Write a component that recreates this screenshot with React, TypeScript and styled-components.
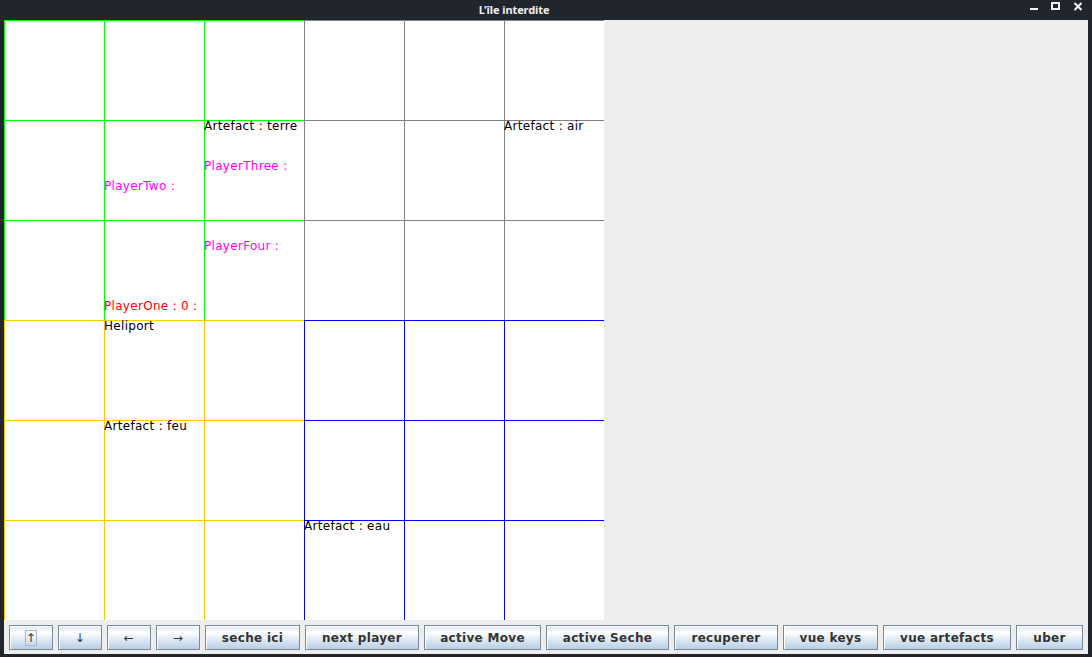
import React from "react";
import styled, { createGlobalStyle } from "styled-components";

const GlobalStyle = createGlobalStyle`
  html, body { margin: 0; padding: 0; background: #21252d; }
  body { font-family: "DejaVu Sans", "Liberation Sans", sans-serif; }
  #root { width: 1092px; height: 657px; }
`;

const Window = styled.div`
  width: 1092px;
  height: 657px;
  background: #21252d;
  display: flex;
  flex-direction: column;
  overflow: hidden;
`;

const TitleBar = styled.div`
  height: 20px;
  display: flex;
  align-items: center;
`;

const Title = styled.div`
  flex: 0 0 1028px;
  text-align: center;
  color: #eef0f2;
  font-family: "Noto Sans", "DejaVu Sans", sans-serif;
  font-weight: bold;
  font-size: 11px;
  line-height: 20px;
  letter-spacing: -0.1px;
`;

const Controls = styled.div`
  flex: 1;
  display: flex;
  align-items: center;
  height: 20px;
`;

const CtrlIcon = styled.svg<{ $ml: number }>`
  display: block;
  flex: none;
  margin-left: ${(p) => p.$ml}px;
`;

const Frame = styled.div`
  margin: 0 4px;
  height: 634px;
  background: #eeeeee;
  display: flex;
  flex-direction: column;
`;

const MainRow = styled.div`
  height: 600px;
  display: flex;
`;

const Board = styled.div`
  width: 600px;
  height: 600px;
  display: grid;
  grid-template-columns: repeat(6, 100px);
  grid-template-rows: repeat(6, 100px);
  background: #ffffff;
`;

const Cell = styled.div<{ $line: string }>`
  box-sizing: border-box;
  border-top: 1px solid ${(p) => p.$line};
  border-left: 1px solid ${(p) => p.$line};
  display: grid;
  grid-template-rows: repeat(5, 20px);
  align-content: start;
  overflow: visible;
  background: #ffffff;
`;

const CellText = styled.span<{ $row: number; $color: string }>`
  grid-row: ${(p) => p.$row + 1};
  color: ${(p) => p.$color};
  font-family: "DejaVu Sans", sans-serif;
  font-size: 12px;
  line-height: 10px;
  letter-spacing: 0.3px;
  margin-left: -1px;
  white-space: nowrap;
  position: relative;
  z-index: 1;
`;

const SidePanel = styled.div`
  flex: 1;
  background: #eeeeee;
`;

const Toolbar = styled.div`
  height: 34px;
  box-sizing: border-box;
  padding: 5px 0 0 5px;
  display: flex;
  gap: 5px;
  align-items: flex-start;
  background: #eeeeee;
`;

const Button = styled.button<{ $w: number }>`
  width: ${(p) => p.$w}px;
  height: 25px;
  box-sizing: border-box;
  margin: 0;
  padding: 0;
  border: 1px solid #7a8a99;
  border-radius: 0;
  box-shadow: inset 1px 1px 0 #ffffff;
  background: linear-gradient(
    to bottom,
    #dde8f3 0%,
    #ffffff 30%,
    #dde8f3 60%,
    #b8cfe5 100%
  );
  color: #333333;
  font-family: "DejaVu Sans", sans-serif;
  font-weight: bold;
  font-size: 12px;
  letter-spacing: 0.3px;
  display: flex;
  align-items: center;
  justify-content: center;
  cursor: default;
`;

const ArrowLabel = styled.span`
  font-weight: normal;
  font-size: 12px;
`;

const Focus = styled.span`
  box-sizing: border-box;
  width: 12px;
  height: 16px;
  border: 1px solid #a3b8cc;
  display: flex;
  align-items: center;
  justify-content: center;
  font-weight: normal;
`;

type Txt = { row: number; text: string; color: string };

const BLACK = "#000000";
const MAG = "#ff00ff";
const RED = "#ff0000";

const texts: Record<string, Txt[]> = {
  "2,1": [
    { row: 0, text: "Artefact : terre", color: BLACK },
    { row: 2, text: "PlayerThree :", color: MAG },
  ],
  "1,1": [{ row: 3, text: "PlayerTwo :", color: MAG }],
  "5,1": [{ row: 0, text: "Artefact : air", color: BLACK }],
  "2,2": [{ row: 1, text: "PlayerFour :", color: MAG }],
  "1,2": [{ row: 4, text: "PlayerOne : 0 :", color: RED }],
  "1,3": [{ row: 0, text: "Heliport", color: BLACK }],
  "1,4": [{ row: 0, text: "Artefact : feu", color: BLACK }],
  "3,5": [{ row: 0, text: "Artefact : eau", color: BLACK }],
};

const zoneColor = (c: number, r: number) => {
  if (r < 3) return c < 3 ? "#00ff00" : "#808080";
  return c < 3 ? "#ffc800" : "#0000ff";
};

const buttons: { label: string; w: number; arrow?: boolean }[] = [
  { label: "↓", w: 44, arrow: true },
  { label: "←", w: 44, arrow: true },
  { label: "→", w: 44, arrow: true },
  { label: "seche ici", w: 95 },
  { label: "next player", w: 114 },
  { label: "active Move", w: 117 },
  { label: "active Seche", w: 123 },
  { label: "recuperer", w: 104 },
  { label: "vue keys", w: 95 },
  { label: "vue artefacts", w: 128 },
  { label: "uber", w: 67 },
];

export default function App() {
  const cells: React.ReactNode[] = [];
  for (let r = 0; r < 6; r++) {
    for (let c = 0; c < 6; c++) {
      const list = texts[`${c},${r}`] || [];
      cells.push(
        <Cell key={`${c}-${r}`} $line={zoneColor(c, r)}>
          {list.map((t, i) => (
            <CellText key={i} $row={t.row} $color={t.color}>
              {t.text}
            </CellText>
          ))}
        </Cell>
      );
    }
  }

  return (
    <>
      <GlobalStyle />
      <Window>
        <TitleBar>
          <Title>L'île interdite</Title>
          <Controls>
            <CtrlIcon $ml={1} width="10" height="20" viewBox="0 0 10 20">
              <rect x="1" y="8" width="8" height="2" fill="#f2f3f5" />
            </CtrlIcon>
            <CtrlIcon $ml={12} width="10" height="20" viewBox="0 0 10 20">
              <rect x="1" y="3" width="7" height="6" fill="none" stroke="#f2f3f5" strokeWidth="2" />
            </CtrlIcon>
            <CtrlIcon $ml={12} width="10" height="20" viewBox="0 0 10 20">
              <path d="M1.5 3 L8.5 10 M8.5 3 L1.5 10" stroke="#f2f3f5" strokeWidth="2" />
            </CtrlIcon>
          </Controls>
        </TitleBar>
        <Frame>
          <MainRow>
            <Board>{cells}</Board>
            <SidePanel />
          </MainRow>
          <Toolbar>
            <Button $w={44}>
              <Focus>↑</Focus>
            </Button>
            {buttons.map((b) => (
              <Button key={b.label} $w={b.w}>
                {b.arrow ? <ArrowLabel>{b.label}</ArrowLabel> : b.label}
              </Button>
            ))}
          </Toolbar>
        </Frame>
      </Window>
    </>
  );
}
